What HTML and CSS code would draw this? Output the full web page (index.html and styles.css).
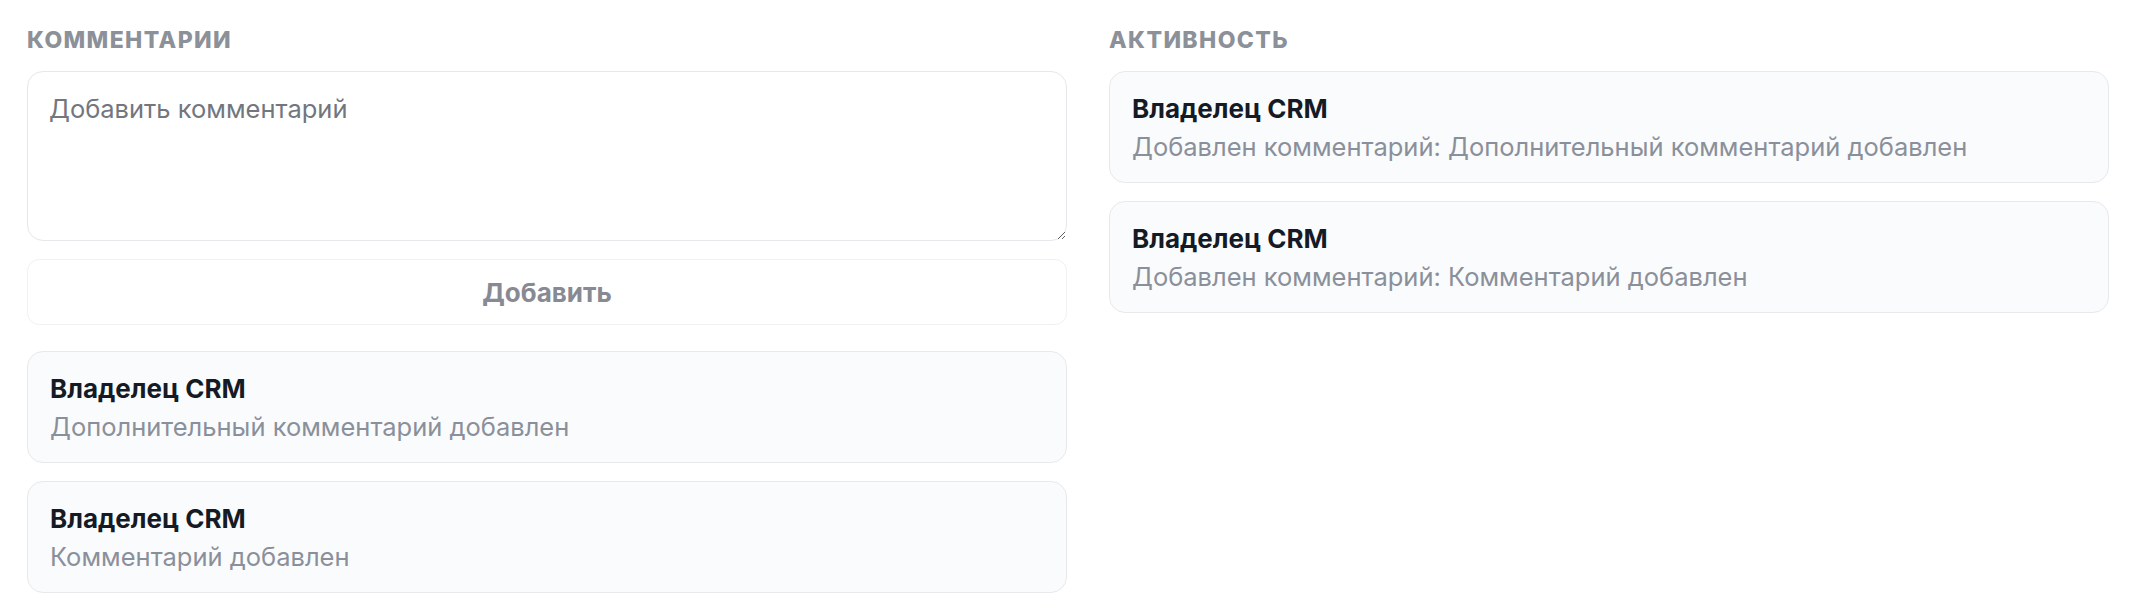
FILE: index.html
```html
<!DOCTYPE html>
<html lang="ru">
<head>
    <meta charset="UTF-8">
    <meta name="viewport" content="width=device-width, initial-scale=1.0">
    <title>Комментарии и активность</title>
    <link rel="stylesheet" href="styles.css">
</head>
<body>
    <div class="layout">
        <section class="column">
            <h2 class="section-title">Комментарии</h2>

            <textarea class="comment-input" placeholder="Добавить комментарий"></textarea>
            <button class="add-button" disabled>Добавить</button>

            <div class="list list-comments">
                <div class="item">
                    <p class="item-author">Владелец CRM</p>
                    <p class="item-text">Дополнительный комментарий добавлен</p>
                </div>
                <div class="item">
                    <p class="item-author">Владелец CRM</p>
                    <p class="item-text">Комментарий добавлен</p>
                </div>
            </div>
        </section>

        <section class="column">
            <h2 class="section-title">Активность</h2>

            <div class="list">
                <div class="item">
                    <p class="item-author">Владелец CRM</p>
                    <p class="item-text">Добавлен комментарий: Дополнительный комментарий добавлен</p>
                </div>
                <div class="item">
                    <p class="item-author">Владелец CRM</p>
                    <p class="item-text">Добавлен комментарий: Комментарий добавлен</p>
                </div>
            </div>
        </section>
    </div>
</body>
</html>
```

FILE: styles.css
```css
* {
    box-sizing: border-box;
}
body {
    font-family: Inter, "Noto Sans", Arial, sans-serif;
    background-color: #fff;
    color: #111827;
    margin: 0;
    padding: 27px;
}
.layout {
    display: grid;
    grid-template-columns: 52fr 50fr;
    gap: 42px;
    align-items: start;
}
.column {
    display: flex;
    flex-direction: column;
}
.section-title {
    margin: 0 0 17px;
    font-size: 23px;
    line-height: 27px;
    font-weight: 800;
    text-transform: uppercase;
    letter-spacing: 0.06em;
    color: #8b9099;
}
.comment-input {
    height: 170px;
    padding: 21px;
    border: 1px solid #e6e7eb;
    border-radius: 16px;
    font-family: inherit;
    font-size: 25.5px;
    line-height: 31px;
    color: #111827;
    resize: vertical;
    outline: none;
}
.comment-input::placeholder {
    color: #72767f;
}
.add-button {
    margin-top: 18px;
    height: 66px;
    border: 1px solid #f0f1f3;
    border-radius: 12px;
    background-color: #fff;
    font-family: inherit;
    font-size: 26px;
    font-weight: 700;
    color: #878a93;
    cursor: default;
}
.list {
    display: flex;
    flex-direction: column;
    gap: 18px;
}
.list-comments {
    margin-top: 26px;
}
.item {
    padding: 21px 22px 20px;
    border: 1px solid #e8e9ed;
    border-radius: 16px;
    background-color: #fafbfc;
}
.item-author {
    margin: 0 0 7px;
    font-size: 26px;
    line-height: 31px;
    font-weight: 700;
    color: #151b26;
}
.item-text {
    margin: 0;
    font-size: 25.5px;
    line-height: 31px;
    color: #8a909b;
}
```
